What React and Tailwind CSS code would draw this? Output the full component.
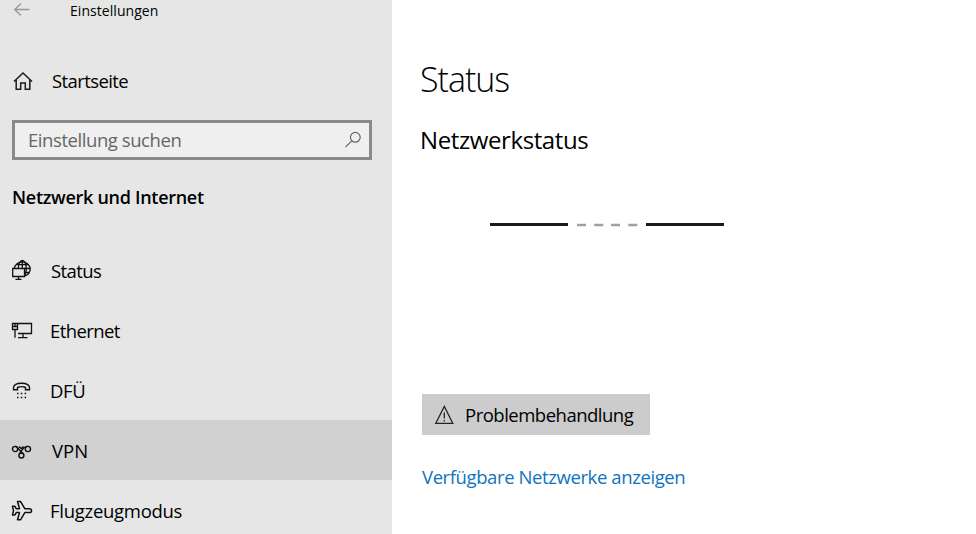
import React, { useState } from 'react';

const BackIcon = () => (
  <svg width="16" height="14" viewBox="0 0 16 14" fill="none" stroke="#999999" strokeWidth="1.3">
    <path d="M7 .5.8 6.500 7 12.500M.8 6.500H15.500" />
  </svg>
);

const HomeIcon = () => (
  <svg width="22" height="20" viewBox="0 0 22 20" fill="none" stroke="#1c1c1c" strokeWidth="1.5">
    <path d="M2 10.500 11 2l9 8.500M4.200 9v9.300h4.500V12h4.600v6.300h4.500V9" />
  </svg>
);

const SearchIcon = () => (
  <svg width="18" height="18" viewBox="0 0 18 18" fill="none" stroke="#666666" strokeWidth="1.2">
    <circle cx="11.300" cy="6.300" r="4.900" />
    <path d="m7.800 9.800-6.300 6.300" />
  </svg>
);

const StatusIcon = () => (
  <svg width="22" height="22" viewBox="0 0 22 22" fill="none" stroke="#111111" strokeWidth="1.3">
    <path d="M3.200 9.500A8.200 8.200 0 0 1 19.300 9.500a8.200 8.200 0 0 1-5.300 7.500M4.500 5.700h13.500M13 9.500h6M14 13.500h4" />
    <path d="M7.300 9.500c0-4 1.700-8 4-8s4 3.500 4 8c0 2.700-.6 5-1.500 7.300M11.300 1.500v8" />
    <path d="M1.700 9.500h11.800v8H1.700z" fill="#e6e6e6" />
    <path d="M7.600 17.500v2.600M4.500 20.300h6" />
  </svg>
);

const EthernetIcon = () => (
  <svg width="22" height="20" viewBox="0 0 22 20" fill="none" stroke="#111111" strokeWidth="1.300">
    <path d="M7 3.500h13.500v10H7M12 13.500v4M7 17.700h9.500" />
    <path d="M1.500 3.500h5v6h-5zM1.500 6.500h5M4 4v2.500M4 9.500v8.200" />
  </svg>
);

const DialUpIcon = () => (
  <svg width="22" height="20" viewBox="0 0 22 20" fill="none" stroke="#111111" strokeWidth="1.400">
    <path d="M2.500 9.800V8C2.500 4.800 6 3.200 10.500 3.200S18.500 4.800 18.500 8v1.800h-4V7.500c-2-1-6-1-8 0v2.300z" />
    <path d="M6 13.500h1.500m2.300 0h1.500m2.300 0h1.500M6 17.500h1.500m2.300 0h1.500m2.300 0h1.500" strokeWidth="1.500" />
  </svg>
);

const VpnIcon = () => (
  <svg width="22" height="20" viewBox="0 0 22 20" fill="none" stroke="#111111" strokeWidth="1.400">
    <circle cx="4.100" cy="9" r="2.600" />
    <circle cx="10.400" cy="15.500" r="2.500" />
    <circle cx="16.900" cy="9" r="2.600" />
    <path d="M4.100 6.400C7.500 6.400 7.500 11 12.200 13.700M8.500 13.900C10.500 11 12 6.400 16.900 6.400M8 6.600l2.300 2 2.200-2" />
  </svg>
);

const AirplaneIcon = () => (
  <svg width="22" height="24" viewBox="0 0 22 24" fill="none" stroke="#111111" strokeWidth="1.500" strokeLinejoin="round">
    <path d="M6.500 3.500h3l4.300 7.200h4.500c3 0 3 3.900 0 3.900h-4.500L9.500 21.800h-3l2-7.200H5.200L4 17H1.500l1-4.400-1-4.300H4l1.200 2.400h3.300z" />
  </svg>
);

const WarningIcon = () => (
  <svg width="20" height="20" viewBox="0 0 20 20" fill="none" stroke="#222222" strokeWidth="1.300">
    <path d="M10.300 1.500 1.800 18.300h17zM10.300 7.500v6M10.300 15v1.500" />
  </svg>
);

const items = [
  { id: 'status', label: 'Status', icon: StatusIcon, text: 'ml-[18px] tracking-[-0.6px]' },
  { id: 'ethernet', label: 'Ethernet', icon: EthernetIcon, text: 'ml-[17px] tracking-[-0.6px]' },
  { id: 'dfue', label: 'DFÜ', icon: DialUpIcon, text: 'ml-[17px] tracking-[-0.3px]' },
  { id: 'vpn', label: 'VPN', icon: VpnIcon, text: 'ml-[19px] tracking-[0px]' },
  { id: 'flugzeug', label: 'Flugzeugmodus', icon: AirplaneIcon, text: 'ml-[17px] tracking-[-0.28px]' },
];

const Sidebar = () => {
  const [active, setActive] = useState('vpn');
  const [query, setQuery] = useState('');

  return (
    <aside className="flex h-full w-[392px] shrink-0 flex-col bg-[#e6e6e6]">
      <div className="flex h-[22px] shrink-0 items-center pl-[14px]">
        <div className="-mt-[3px]"><BackIcon /></div>
        <span className="ml-10 text-[14px] leading-5 tracking-[0.05px]">Einstellungen</span>
      </div>
      <div className="mt-[39px] flex h-10 shrink-0 items-center pl-3">
        <HomeIcon />
        <span className="ml-[18px] text-[18.5px] tracking-[-0.6px]">Startseite</span>
      </div>
      <div className="mt-[19px] mr-5 ml-3 flex h-10 shrink-0 items-center border-[3px] border-[#8a8a8a] bg-[#efefef] pr-[7px] pl-[13px]">
        <input
          value={query}
          onChange={(e) => setQuery(e.target.value)}
          placeholder="Einstellung suchen"
          className="min-w-0 flex-1 text-[18.5px] tracking-[-0.43px] outline-none placeholder:text-[#666666]"
        />
        <SearchIcon />
      </div>
      <h2 className="mt-[23px] shrink-0 pl-3 text-[18px] leading-7 font-semibold tracking-[-0.29px]">Netzwerk und Internet</h2>
      <nav className="mt-[29px] shrink-0">
        {items.map(({ id, label, icon: Icon, text }) => (
          <button
            key={id}
            onClick={() => setActive(id)}
            className={`flex h-[60px] w-full items-center pl-[11px] text-[18.5px] ${active === id ? 'bg-[#d1d1d1]' : ''}`}
          >
            <Icon />
            <span className={`mt-[2px] ${text}`}>{label}</span>
          </button>
        ))}
      </nav>
    </aside>
  );
};

const ConnectionDiagram = () => (
  <svg className="block" width="236" height="6" viewBox="0 0 236 6">
    <path d="M0 2.500h78M156 2.500h78" stroke="#1a1a1a" strokeWidth="3" />
    <path d="M87 3h9m8.300 0h9m7.700 0h9m8.300 0h9" stroke="#a0a0a0" strokeWidth="2.400" />
  </svg>
);

const App = () => {
  return (
    <div className="flex h-[534px] w-[976px] overflow-hidden bg-white font-['Open_Sans','Noto_Sans',sans-serif] whitespace-nowrap text-black">
      <Sidebar />
      <main className="flex flex-col items-start pl-[30px]">
        <h1 className="mt-[55px] -ml-[2px] text-[34px] leading-12 font-[340] tracking-[-1px]">Status</h1>
        <h2 className="mt-[21px] -ml-[2px] text-[24px] leading-8 tracking-[-0.4px]">Netzwerkstatus</h2>
        <div className="mt-[66px] ml-[68px]"><ConnectionDiagram /></div>
        <button className="mt-[166px] flex h-[41px] w-[228px] items-center bg-[#cccccc] pl-3 text-[18.5px]">
          <WarningIcon />
          <span className="ml-[11px] tracking-[-0.5px]">Problembehandlung</span>
        </button>
        <a href="#" className="mt-[28px] text-[18.5px] leading-7 tracking-[-0.4px] text-[#0f73bd]">Verfügbare Netzwerke anzeigen</a>
      </main>
    </div>
  );
};

export default App;
